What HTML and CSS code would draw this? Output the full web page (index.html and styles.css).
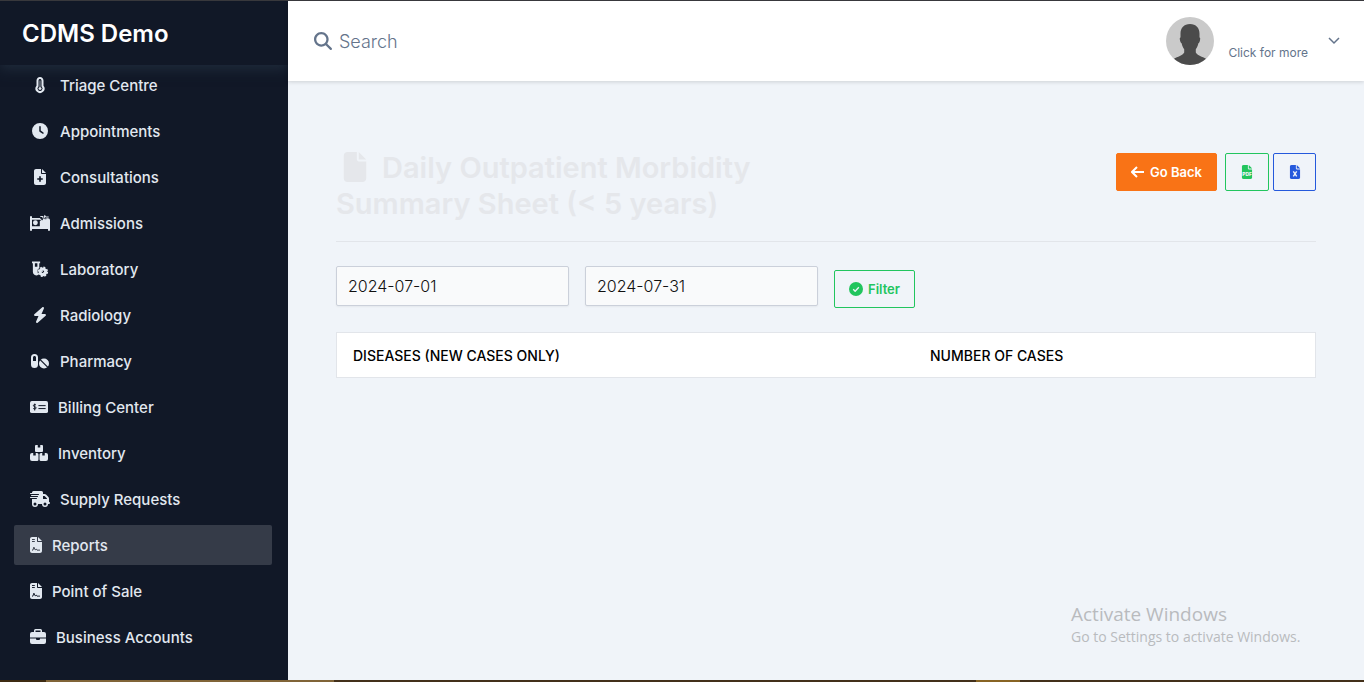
FILE: index.html
```html
<!DOCTYPE html>
<html lang="en">
<head>
<meta charset="utf-8">
<meta name="viewport" content="width=device-width, initial-scale=1">
<title>CDMS Demo</title>
<link rel="stylesheet" href="styles.css">
</head>
<body>
<svg class="sprite" aria-hidden="true">
  <symbol id="file" viewBox="0 0 384 512"><path d="M0 64C0 28.700 28.700 0 64 0H224V128c0 17.700 14.300 32 32 32H384V448c0 35.300-28.700 64-64 64H64c-35.300 0-64-28.700-64-64V64zm384 64H256V0L384 128z"/></symbol>
  <symbol id="file-sign" viewBox="0 0 384 512"><use href="#file"/><path class="cut-line" d="M64 80h90M64 144h90M64 420h28l32-96 42 88 34-24 24 32h96" stroke-width="30"/></symbol>
</svg>
<div class="app">
  <aside class="sidebar">
    <div class="brand">CDMS Demo</div>
    <nav class="menu">
      <a class="item" href="#"><span class="slot"><svg class="icon" width="10" height="16" viewBox="0 0 320 512"><path fill-rule="evenodd" d="M160 0C98 0 48 50 48 112v165a144 144 0 1 0 224 0V112C272 50 222 0 160 0zM160 64c26 0 48 21 48 48v188l10 12a80 80 0 1 1-116 0l10-12V112c0-27 22-48 48-48z"/><path d="M136 112h48v212a52 52 0 1 1-48 0z" opacity=".45"/><circle cx="160" cy="368" r="42"/></svg></span>Triage Centre</a>
      <a class="item" href="#"><span class="slot"><svg class="icon" width="16" height="16" viewBox="0 0 512 512"><path d="M256 0a256 256 0 1 1 0 512A256 256 0 1 1 256 0zM232 120V256c0 8 4 15.500 10.700 20l96 64c11 7.400 25.900 4.400 33.300-6.700s4.400-25.900-6.700-33.300L280 243.200V120c0-13.300-10.700-24-24-24s-24 10.700-24 24z"/></svg></span>Appointments</a>
      <a class="item" href="#"><span class="slot"><svg class="icon" width="12" height="16" viewBox="0 0 384 512"><use href="#file"/><path class="cut-line" d="M192 232v176M104 320h176" stroke-width="52"/></svg></span>Consultations</a>
      <a class="item" href="#"><span class="slot"><svg class="icon" width="20" height="16" viewBox="0 0 640 512"><path fill-rule="evenodd" d="M0 64a32 32 0 0 1 64 0v32h280l40 74 70-130 36 64h86c36 0 64 28 64 64v312a32 32 0 0 1-64 0v-32H64v32a32 32 0 0 1-64 0zM64 150v208h250V150zM314 150v40h44z"/><circle cx="172" cy="246" r="78"/><path d="M330 48h70l30 66 44-90 36 40h88" fill="none" stroke="currentColor" stroke-width="34"/><path class="cut-line" d="M320 118h48l22 46 46-84 30 40h60" stroke-width="24"/></svg></span>Admissions</a>
      <a class="item" href="#"><span class="slot"><svg class="icon" width="16" height="16" viewBox="0 0 512 512"><path fill-rule="evenodd" d="M0 16h260v56h-28v150l-54 60v70l24 90a112 112 0 0 1-174-92V72H0zM92 72v108h80V72z"/><circle cx="348" cy="346" r="90" fill="none" stroke="currentColor" stroke-width="100"/><circle cx="348" cy="346" r="144" fill="none" stroke="currentColor" stroke-width="48" stroke-dasharray="62 51"/><circle cx="322" cy="322" r="30"/><circle cx="380" cy="374" r="20"/></svg></span>Laboratory</a>
      <a class="item" href="#"><span class="slot"><svg class="icon" width="14" height="16" viewBox="0 0 448 512"><path d="M349.400 44.600c5.900-13.700 1.500-29.700-10.600-38.500s-28.600-8-39.900 1.800l-256 224c-10 8.800-13.600 22.900-8.900 35.300S50.700 288 64 288H175.500L98.600 467.400c-5.900 13.700-1.500 29.700 10.600 38.500s28.600 8 39.900-1.800l256-224c10-8.800 13.600-22.900 8.900-35.300s-16.600-20.700-30-20.700H272.500L349.400 44.600z"/></svg></span>Radiology</a>
      <a class="item" href="#"><span class="slot"><svg class="icon" width="18" height="16" viewBox="0 0 576 512"><path fill-rule="evenodd" d="M112 32A112 112 0 0 0 0 144v224a112 112 0 0 0 224 0V144A112 112 0 0 0 112 32zM112 96c27 0 48 21 48 48v112H64V144c0-27 21-48 48-48z"/><circle cx="416" cy="336" r="160"/><path class="cut-line" d="M292 212l248 248" stroke-width="40"/></svg></span>Pharmacy</a>
      <a class="item" href="#"><svg class="icon" width="18" height="16" viewBox="0 0 576 512"><rect y="64" width="576" height="384" rx="60"/><path class="cut-line" d="M270 212h230M270 306h230M192 190c-20-20-84-20-84 22 0 46 88 26 88 72 0 44-68 42-92 18M150 148v220" stroke-width="32"/></svg>Billing Center</a>
      <a class="item" href="#"><svg class="icon" width="18" height="16" viewBox="0 0 576 512"><path d="M248 0h-56a32 32 0 0 0-32 32v160a32 32 0 0 0 32 32h192a32 32 0 0 0 32-32V32a32 32 0 0 0-32-32h-56v80h-80zM64 256a64 64 0 0 0-64 64v128a64 64 0 0 0 64 64h160a48 48 0 0 0 48-48V304a48 48 0 0 0-48-48h-40v80h-80v-80zM352 256a48 48 0 0 0-48 48v160a48 48 0 0 0 48 48h160a64 64 0 0 0 64-64V320a64 64 0 0 0-64-64h-40v80h-80v-80z"/></svg>Inventory</a>
      <a class="item" href="#"><svg class="icon" width="20" height="16" viewBox="0 0 640 512"><path fill-rule="evenodd" d="M112 0a48 48 0 0 0-48 48v16H16a16 16 0 0 0 0 32h256a16 16 0 0 1 0 32H48a16 16 0 0 0 0 32h192a16 16 0 0 1 0 32H16a16 16 0 0 0 0 32h192a16 16 0 0 1 0 32H64v160a96 96 0 0 0 192 0h128a96 96 0 0 0 192 0h32a32 32 0 0 0 0-64V237c0-17-7-33-19-45L512 115c-12-12-28-19-45-19h-51V48a48 48 0 0 0-48-48zM544 237v19H416v-96h51zM160 368a48 48 0 1 1 0 96 48 48 0 1 1 0-96zM480 368a48 48 0 1 1 0 96 48 48 0 1 1 0-96z"/></svg>Supply Requests</a>
      <a class="item active" href="#" aria-current="page"><svg class="icon" width="12" height="16"><use href="#file-sign"/></svg>Reports</a>
      <a class="item" href="#"><svg class="icon" width="12" height="16"><use href="#file-sign"/></svg>Point of Sale</a>
      <a class="item" href="#"><svg class="icon" width="16" height="16" viewBox="0 0 512 512"><path fill-rule="evenodd" d="M176 0a48 48 0 0 0-48 48v48H64a64 64 0 0 0-64 64v112h512V160a64 64 0 0 0-64-64h-64V48a48 48 0 0 0-48-48zM176 48h160v48H176zM0 304v112a64 64 0 0 0 64 64h384a64 64 0 0 0 64-64V304H320v16a32 32 0 0 1-32 32h-64a32 32 0 0 1-32-32v-16z"/></svg>Business Accounts</a>
    </nav>
  </aside>
  <div class="page">
    <header class="topbar">
      <label class="search">
        <svg class="icon" width="18" height="18" viewBox="0 0 512 512" aria-hidden="true"><path d="M416 208c0 45.900-14.900 88.300-40 122.700L502.600 457.400c12.500 12.500 12.500 32.800 0 45.300s-32.800 12.500-45.300 0L330.700 376c-34.400 25.200-76.800 40-122.700 40C93.100 416 0 322.900 0 208S93.100 0 208 0S416 93.100 416 208zM208 352a144 144 0 1 0 0-288 144 144 0 1 0 0 288z"/></svg>
        <input class="search-input" type="text" placeholder="Search" aria-label="Search">
      </label>
      <button class="profile" type="button">
        <svg class="avatar" width="48" height="48" viewBox="0 0 48 48" aria-hidden="true"><circle cx="24" cy="24" r="24" fill="#cacaca"/><path fill="#4b4b4b" d="M24 7c-6 0-9.500 4-9.500 9.500v4c-1 0-.8 1.500-.4 3.200.4 1.500.9 2.300 1.500 2.500.5 2.500 1.400 4.400 2.600 6v3.300c-1.500 3-6.700 4.200-10.200 6.300A24 24 0 0 0 24 48a24 24 0 0 0 16-6.200c-3.500-2.100-8.700-3.300-10.200-6.300v-3.300c1.200-1.600 2.100-3.500 2.600-6 .6-.2 1.100-1 1.500-2.500.4-1.700.6-3.200-.4-3.200v-4C33.500 11 30 7 24 7z"/></svg>
        <span class="profile-text">Click for more</span>
        <svg class="chevron" width="12" height="8" viewBox="0 0 12 8" aria-hidden="true"><path d="M1 1l5 5 5-5"/></svg>
      </button>
    </header>
    <main class="content">
      <div class="heading">
        <h1 class="title"><svg class="title-icon" width="24" height="30"><use href="#file"/></svg>Daily Outpatient Morbidity Summary Sheet (&lt; 5 years)</h1>
        <div class="actions">
          <button class="btn solid" type="button"><svg class="stroke" width="14" height="12" viewBox="0 0 14 12" aria-hidden="true"><path d="M13 6H2M6 1L1 6l5 5"/></svg>Go Back</button>
          <div class="exports">
            <button class="btn green" type="button" aria-label="Export PDF"><svg class="icon" width="12" height="14" viewBox="0 0 384 512"><use href="#file"/><text class="pdf-tag" x="192" y="384">PDF</text></svg></button>
            <button class="btn blue" type="button" aria-label="Export Excel"><svg class="icon" width="12" height="14" viewBox="0 0 384 512"><use href="#file"/><path class="cut-line" d="M130 236l124 180M254 236L130 416" stroke-width="52"/></svg></button>
          </div>
        </div>
      </div>
      <form class="filters">
        <input class="date" type="text" value="2024-07-01" aria-label="From date">
        <input class="date" type="text" value="2024-07-31" aria-label="To date">
        <div class="submit"><button class="btn green" type="button"><svg class="icon" width="14" height="14" viewBox="0 0 512 512" aria-hidden="true"><circle cx="256" cy="256" r="256"/><path class="cut-line" d="M155 265l70 70 135-140" stroke-width="50"/></svg>Filter</button></div>
      </form>
      <table class="report">
        <thead><tr><th class="disease" scope="col">Diseases (New cases only)</th><th scope="col">Number of cases</th></tr></thead>
      </table>
    </main>
  </div>
  <div class="watermark"><div class="wm-title">Activate Windows</div><div class="wm-text">Go to Settings to activate Windows.</div></div>
</div>
<div class="strip"></div>
</body>
</html>
```

FILE: styles.css
```css
* { box-sizing: border-box; }
body {
  margin: 0;
  height: 100vh;
  display: flex;
  flex-direction: column;
  border-top: 1px solid #38383c;
  font-family: Inter, "Liberation Sans", sans-serif;
  background: #f0f4f9;
  color: #0b0d12;
}
button, input { font-family: inherit; }
svg { flex: none; }
.sprite { position: absolute; width: 0; height: 0; }
.icon { fill: currentColor; overflow: visible; }
.cut-line { fill: none; stroke: var(--surface); stroke-linejoin: round; }

.app { position: relative; flex: 1; min-height: 0; display: flex; }

.sidebar {
  --surface: #111827;
  width: 288px;
  flex: none;
  display: flex;
  flex-direction: column;
  overflow: hidden;
  background: #111827;
  color: #e2e8f0;
}
.brand {
  height: 64px;
  flex: none;
  padding: 2px 22px 0;
  font-size: 24px;
  line-height: 62px;
  font-weight: 600;
  color: #fff;
  box-shadow: 0 4px 12px #1f2b3b;
}
.menu {
  display: flex;
  flex-direction: column;
  justify-content: flex-end;
  gap: 6px;
  flex: 1;
  min-height: 0;
  overflow: hidden;
  padding: 0 16px 23px 14px;
}
.item {
  height: 40px;
  flex: none;
  padding: 0 16px;
  display: flex;
  align-items: center;
  gap: 10px;
  border-radius: 2px;
  font-size: 15px;
  font-weight: 500;
  color: inherit;
  text-decoration: none;
}
.slot { width: 20px; display: flex; justify-content: center; }
.active { --surface: #353b48; background: #353b48; }

.page { flex: 1; min-width: 0; display: flex; flex-direction: column; }
.topbar {
  height: 80px;
  padding: 0 24px 0 26px;
  display: flex;
  align-items: center;
  justify-content: space-between;
  background: #fff;
  color: #64748b;
  box-shadow: 0 1px 4px #00000026;
}
.search { display: flex; align-items: center; gap: 7px; flex: 1; }
.search-input {
  flex: 1;
  border: 0;
  padding: 0;
  outline: 0;
  font-size: 18px;
  font-weight: 300;
  background: none;
  color: #64748b;
}
.search-input::placeholder { color: #64748b; opacity: 1; }
.profile {
  display: flex;
  align-items: center;
  border: 0;
  padding: 0;
  background: none;
  color: #64748b;
}
.profile-text { margin: 24px 20px 0 14px; font-size: 12px; line-height: 16px; }
.chevron, .stroke { fill: none; stroke: currentColor; stroke-width: 2; }
.chevron { stroke-width: 1.5; }

.content { padding: 69px 48px 24px; }
.heading {
  display: flex;
  justify-content: space-between;
  padding-bottom: 19px;
  border-bottom: 1px solid #e2e5ea;
}
.title {
  margin: 0;
  max-width: 440px;
  font-size: 29px;
  line-height: 36px;
  font-weight: 600;
  color: #e5e7eb;
}
.title-icon { fill: currentColor; margin: 0 15px 0 7px; vertical-align: -4px; }
.actions { display: flex; gap: 8px; padding-top: 3px; }
.exports { display: flex; gap: 4px; }
.btn {
  height: 38px;
  padding: 0 14px;
  display: flex;
  align-items: center;
  gap: 5px;
  border: 1px solid currentColor;
  border-radius: 2px;
  font-size: 13px;
  font-weight: 600;
  background: none;
}
.exports .btn { width: 44px; justify-content: center; }
.exports .blue { width: 43px; }
.solid { border-color: #f97316; background: #f97316; color: #fff; }
.green { --surface: #f0f4f9; color: #22c55e; }
.blue { --surface: #f0f4f9; color: #2559dc; }
.pdf-tag { font-size: 180px; font-weight: 800; text-anchor: middle; fill: #f0f4f9; }

.filters {
  display: grid;
  grid-template-columns: repeat(4, 1fr);
  gap: 16px;
  margin: 24px 0;
}
.date {
  width: 100%;
  height: 40px;
  padding: 0 11px;
  border: 1px solid #cbd0da;
  border-radius: 2px;
  background: #f9fafb;
  box-shadow: 0 1px 2px #0000000d;
  font-size: 16px;
  font-weight: 300;
  color: #111;
}
.submit { display: flex; padding-top: 4px; }

.report {
  width: 100%;
  border-collapse: separate;
  border-spacing: 0;
  border: 1px solid #e2e5ea;
  background: #fff;
}
.report th {
  height: 44px;
  padding: 0 16px;
  text-align: left;
  text-transform: uppercase;
  font-size: 14px;
  font-weight: 500;
  color: #000;
}
.report .disease { width: 59%; }

.watermark {
  position: absolute;
  right: 57px;
  bottom: 33px;
  width: 236px;
  font-family: "Open Sans", "Noto Sans", sans-serif;
  color: #b9bbbe;
}
.wm-title { font-size: 19px; line-height: 26px; }
.wm-text { font-size: 14px; line-height: 20px; }
.strip {
  height: 2px;
  flex: none;
  background: linear-gradient(90deg, #3d2b12 46px, #806438 46px 334px, #43301a 334px 976px, #886424 976px 1020px, #43301a 1020px);
}
```
